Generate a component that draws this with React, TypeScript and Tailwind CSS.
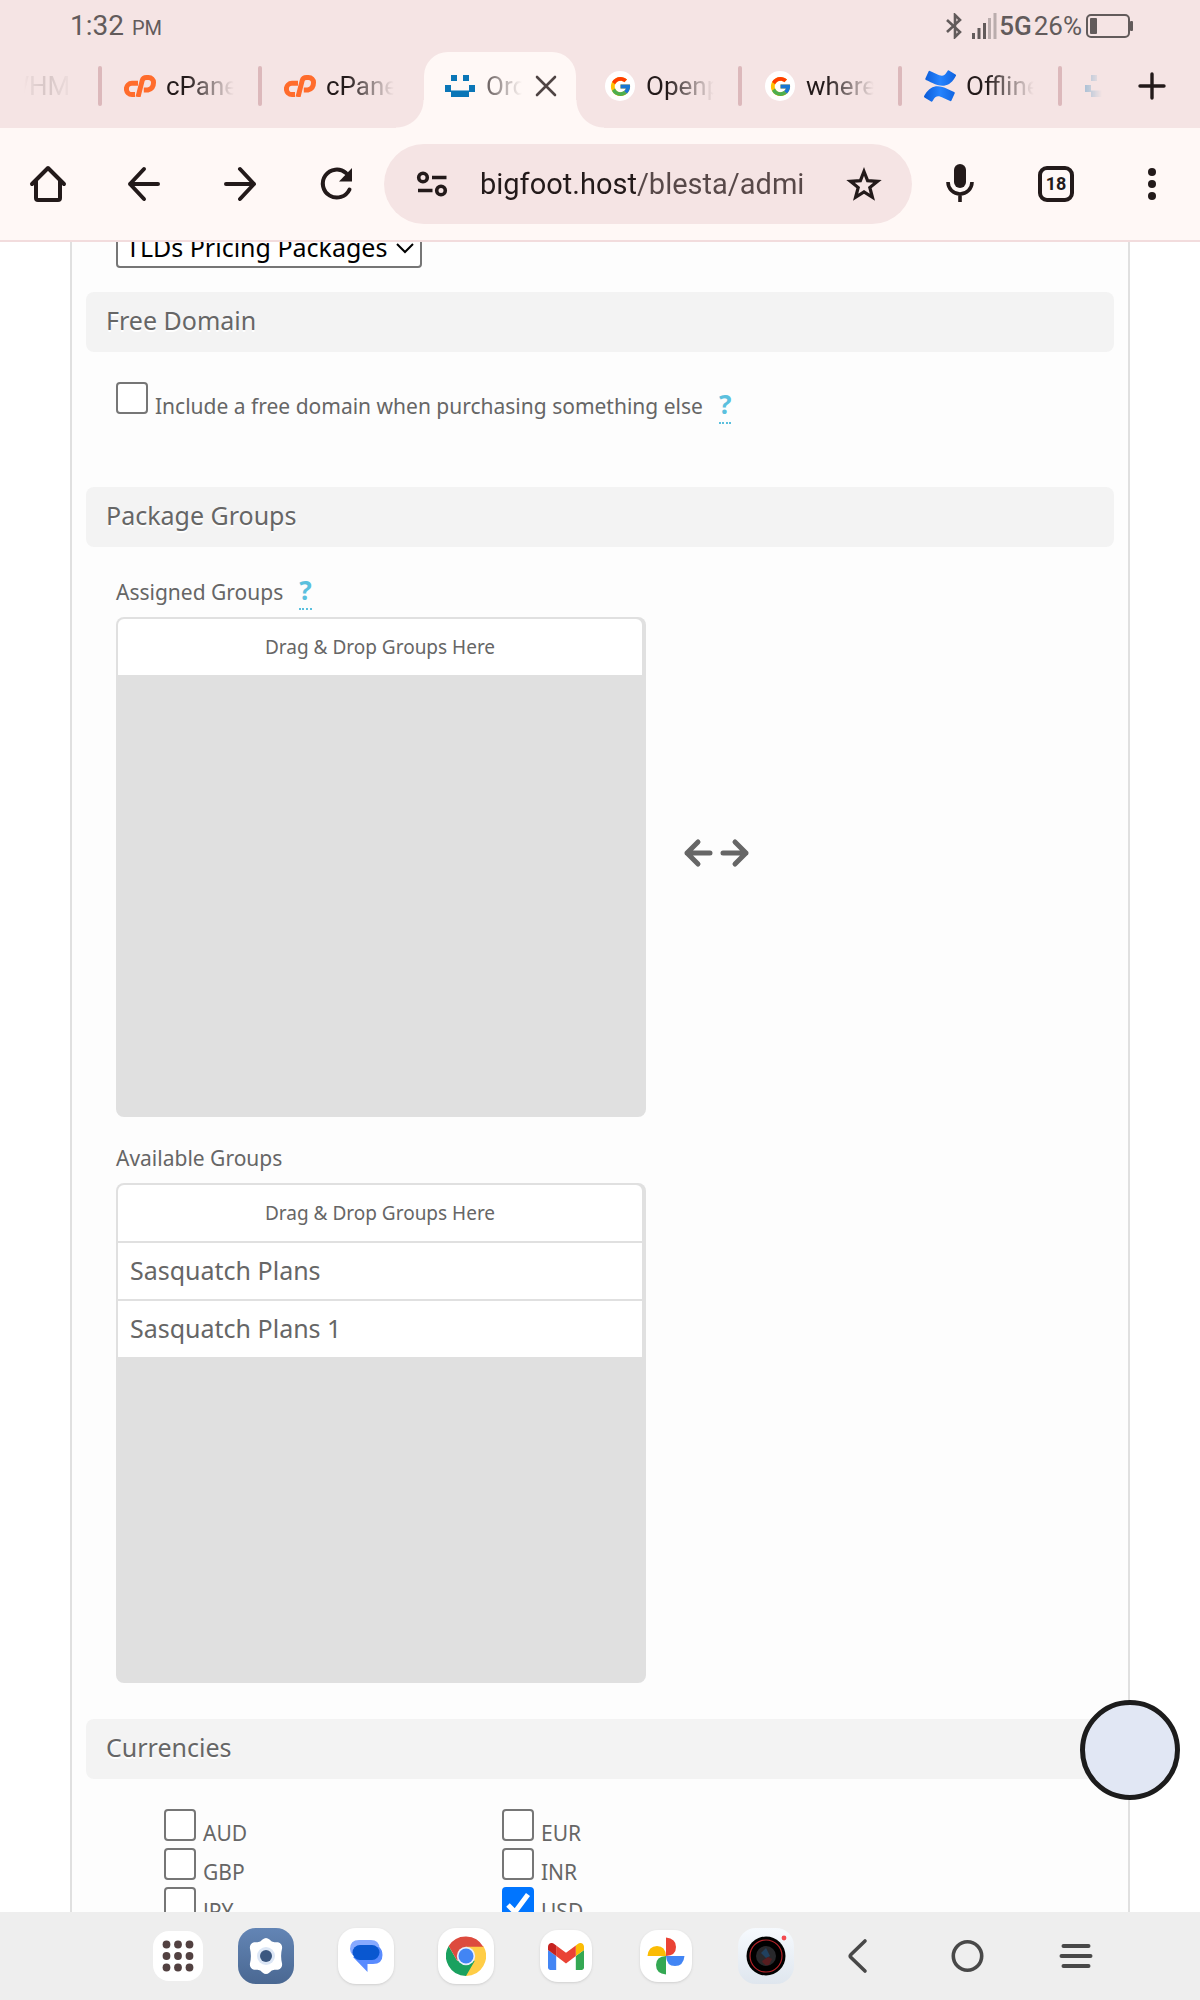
import { useState } from 'react';
import type { ReactNode } from 'react';
import { FcGoogle } from 'react-icons/fc';
import { SiConfluence } from 'react-icons/si';

// Shape of a tab in the browser tab strip
interface BrowserTab {
  id: number;
  title: string;
  icon: ReactNode;
  active?: boolean;
  fade?: string;
}

const BlestaIcon = () => (
  <svg viewBox="0 0 32 24" className="h-6 w-8" shapeRendering="crispEdges">
    <g fill="#0a76b7">
      <rect x="7" y="1" width="6" height="6" />
      <rect x="19" y="1" width="6" height="6" />
      <rect x="1" y="11" width="6" height="7" />
      <rect x="25" y="11" width="6" height="7" />
      <rect x="7" y="17" width="18" height="6" />
    </g>
    <path d="M7 16.5h18" stroke="#7db5d6" strokeWidth="1" />
  </svg>
);

const CpanelIcon = () => (
  <svg viewBox="0 0 32 22" className="h-[22px] w-8" fill="none" stroke="#ff6c2c" strokeWidth="5">
    <path d="M14 8.300H8a5.600 5.600 0 0 0 0 11.200h3" />
    <path d="M14 22L18.200 5.500Q19 2.500 22.500 2.500h2a5 5 0 0 1 5 5.200q0 6-5.700 7.300h-4" />
  </svg>
);

const GoogleIcon = () => (
  <span className="flex size-[30px] items-center justify-center rounded-full bg-white">
    <FcGoogle size={23} />
  </span>
);

const ConfluenceIcon = () => (
  <>
    <svg className="absolute size-0">
      <linearGradient id="confluence" x1="0" y1="0" x2="1" y2="0">
        <stop offset="0" stopColor="#0a5ad6" />
        <stop offset="0.5" stopColor="#2684ff" />
        <stop offset="1" stopColor="#0f62de" />
      </linearGradient>
    </svg>
    <SiConfluence size={32} fill="url(#confluence)" />
  </>
);

const tabs: BrowserTab[] = [
  { id: 1, title: 'WHM', icon: <CpanelIcon />, fade: '[mask-image:linear-gradient(90deg,transparent_84px,#0004_110px)]' },
  { id: 2, title: 'cPanel', icon: <CpanelIcon /> },
  { id: 3, title: 'cPanel', icon: <CpanelIcon /> },
  { id: 4, title: 'Order', icon: <BlestaIcon />, active: true },
  { id: 5, title: 'Openprovider', icon: <GoogleIcon /> },
  { id: 6, title: 'where', icon: <GoogleIcon /> },
  { id: 7, title: 'Offline', icon: <ConfluenceIcon /> },
  { id: 8, title: '', icon: <BlestaIcon />, fade: '[mask-image:linear-gradient(90deg,#0006_20px,transparent_42px)]' },
];

function StatusBar() {
  return (
    <div className="flex h-[50px] items-center justify-between pt-px pr-[66px] pl-[70px] text-[#625b5b]">
      <div className="flex items-baseline gap-2 font-[Roboto] text-[28px] leading-8">
        <span>1:32</span>
        <span className="text-xl">PM</span>
      </div>
      <div className="flex items-center font-[Roboto] text-[26px] leading-8">
        <svg viewBox="0 0 16 26" className="mr-[10px] h-[26px] w-4" fill="none" stroke="currentColor" strokeWidth="2.600">
          <path d="M1 7l13 12-5 5V2l5 5L1 19" />
        </svg>
        <svg viewBox="0 0 26 26" className="mr-px h-[26px] w-[26px]" fill="currentColor">
          <rect x="0" y="20" width="3" height="6" />
          <rect x="5.500" y="15" width="3" height="11" />
          <rect x="11" y="10" width="3" height="16" />
          <rect x="16" y="5" width="3" height="21" opacity=".4" />
          <rect x="21.500" y="0" width="3" height="26" opacity=".4" />
        </svg>
        <span className="mr-0.5 font-medium">5G</span>
        <span className="mr-1">26%</span>
        <svg viewBox="0 0 48 24" className="h-6 w-12">
          <rect x="1" y="1" width="42" height="22" rx="4" fill="none" stroke="currentColor" strokeWidth="2" />
          <rect x="4" y="4" width="7" height="16" rx="1" fill="currentColor" />
          <rect x="44" y="7" width="3" height="10" rx="1" fill="currentColor" />
        </svg>
      </div>
    </div>
  );
}

function TabStrip() {
  return (
    <div className="flex h-[78px] items-end">
      <div className="h-full min-w-0 flex-1 overflow-hidden">
        {/* The strip is scrolled, so the first tab is cut off */}
        <div className="-ml-[60px] flex h-full">
          {tabs.map((tab, index) => {
            const lineAfter = !tab.active && !tabs[index + 1]?.active && index < tabs.length - 1;
            return (
              <div key={tab.id} className="relative h-full w-40 shrink-0">
                {tab.active && (
                  <>
                    <div className="absolute inset-x-1 top-0.5 bottom-0 rounded-t-3xl bg-[#fff8f6]" />
                    <div className="absolute bottom-0 -left-6 size-7 bg-[radial-gradient(circle_at_top_left,transparent_27px,#fff8f6_28px)]" />
                    <div className="absolute -right-6 bottom-0 size-7 bg-[radial-gradient(circle_at_top_right,transparent_27px,#fff8f6_28px)]" />
                  </>
                )}
                <div className={`absolute inset-0 flex items-center pb-[6px] pl-6 ${tab.fade ?? ''}`}>
                  <span className="flex w-8 shrink-0 justify-center">{tab.icon}</span>
                  <button
                    className={
                      tab.active
                        ? 'ml-[10px] w-9 overflow-hidden bg-[linear-gradient(90deg,#665c5c,transparent)] bg-clip-text text-left font-[Roboto] text-[26px] leading-8 whitespace-nowrap text-transparent'
                        : 'ml-[10px] w-[70px] overflow-hidden bg-[linear-gradient(90deg,#231a1a_30%,transparent_97%)] bg-clip-text text-left font-[Roboto] text-[26px] leading-8 whitespace-nowrap text-transparent'
                    }
                  >
                    {tab.title}
                  </button>
                  {tab.active && (
                    <button aria-label="Close tab" className="ml-[13px]">
                      <svg viewBox="0 0 22 22" className="size-[22px]" stroke="#4f4444" strokeWidth="2.600" strokeLinecap="round">
                        <path d="M2 2l18 18M20 2L2 20" />
                      </svg>
                    </button>
                  )}
                </div>
                {lineAfter && <div className="absolute top-4 -right-0.5 h-10 w-1 rounded-full bg-[#dcb8bb]" />}
              </div>
            );
          })}
        </div>
      </div>
      <button aria-label="New tab" className="flex h-full w-24 items-center justify-center pb-[6px]">
        <svg viewBox="0 0 28 28" className="size-7" stroke="#231a1a" strokeWidth="3.400" strokeLinecap="round">
          <path d="M14 2v24M2 14h24" />
        </svg>
      </button>
    </div>
  );
}

// Square button of the browser toolbar
function ToolButton({ label, children }: { label: string; children: ReactNode }) {
  return (
    <button aria-label={label} className="flex h-full w-24 shrink-0 items-center justify-center">
      <svg viewBox="0 0 48 48" className="size-12" fill="none" stroke="#231a1a" strokeWidth="4" strokeLinecap="round" strokeLinejoin="round">
        {children}
      </svg>
    </button>
  );
}

function Toolbar() {
  return (
    <div className="flex h-[114px] items-center border-b-2 border-[#f2dcdd] bg-[#fff8f6]">
      <ToolButton label="Home">
        <path d="M8 24L24 8l16 16M12 21v17a2 2 0 0 0 2 2h20a2 2 0 0 0 2-2V21" />
      </ToolButton>
      <ToolButton label="Back">
        <path d="M38 24H10M24 9L10 24l14 15" />
      </ToolButton>
      <ToolButton label="Forward">
        <path d="M10 24h28M24 9l14 15-14 15" />
      </ToolButton>
      <ToolButton label="Reload">
        <path d="M37.500 29.500A14 14 0 1 1 34 13" />
        <path d="M40 8v13.500H27z" fill="#231a1a" stroke="none" />
      </ToolButton>
      <div className="flex h-20 min-w-0 flex-1 items-center rounded-full bg-[#f5e4e4] pr-[30px] pl-8">
        <svg viewBox="0 0 32 28" className="h-7 w-8 shrink-0" fill="none" stroke="#231a1a" strokeWidth="3.600">
          <circle cx="7" cy="7.500" r="4.300" />
          <path d="M16 7.500h14.500M2 20.500h14.500" />
          <circle cx="25" cy="20.500" r="4.300" />
        </svg>
        <input
          aria-label="Address"
          defaultValue="bigfoot.host/blesta/admi"
          className="ml-8 w-0 min-w-0 flex-1 bg-[linear-gradient(90deg,#231a1a_157px,#574848_157px)] bg-clip-text font-[Roboto] text-[29px] leading-10 text-transparent outline-none"
        />
        <button aria-label="Bookmark">
          <svg viewBox="0 0 36 36" className="size-9" fill="none" stroke="#231a1a" strokeWidth="3.200">
            <path d="M18 5.500l3.600 9.200 9.900.6-7.700 6.200 2.600 9.800L18 26l-8.400 5.300 2.600-9.800-7.700-6.200 9.900-.6z" />
          </svg>
        </button>
      </div>
      <ToolButton label="Voice search">
        <rect x="18" y="4" width="12" height="24" rx="6" fill="#231a1a" stroke="none" />
        <path d="M12 22a12 12 0 0 0 24 0M24 34v8" strokeWidth="3.600" strokeLinecap="butt" />
      </ToolButton>
      <button aria-label="Tabs" className="flex h-full w-24 shrink-0 items-center justify-center">
        <span className="flex size-9 items-center justify-center rounded-[9px] border-4 border-[#231a1a] font-[Roboto] text-lg font-bold text-[#231a1a]">18</span>
      </button>
      <ToolButton label="Menu">
        <g fill="#231a1a" stroke="none">
          <circle cx="24" cy="12" r="4" />
          <circle cx="24" cy="24" r="4" />
          <circle cx="24" cy="36" r="4" />
        </g>
      </ToolButton>
    </div>
  );
}

const SectionTitle = ({ children }: { children: ReactNode }) => (
  <h3 className="h-[60px] rounded-lg bg-[#f3f3f3] px-5 text-[25px] leading-[56px] [text-shadow:0_2px_0_#fff]">{children}</h3>
);

const Help = () => (
  <a href="#help" className="ml-4 border-b-2 border-dotted border-[#5bc0de] text-[26px] font-bold text-[#5bc0de]">?</a>
);

function Checkbox({ label, checked, children }: { label: string; checked?: boolean; children?: ReactNode }) {
  const [on, setOn] = useState(!!checked);
  const id = `check-${label}`;

  return (
    <div className="flex h-[39px] items-baseline">
      <span className="relative mr-[7px] size-8 shrink-0">
        <input
          id={id}
          type="checkbox"
          checked={on}
          onChange={(e) => setOn(e.target.checked)}
          className="block size-8 appearance-none rounded border-2 border-[#767676] bg-white checked:border-[#0075ff] checked:bg-[#0075ff]"
        />
        {on && (
          <svg viewBox="0 0 32 32" className="pointer-events-none absolute inset-0" fill="none" stroke="#fff" strokeWidth="5">
            <path d="M6 18l7 7L26 7.500" />
          </svg>
        )}
      </span>
      <span className="text-[21px] leading-[30px]">
        <label htmlFor={id}>{label}</label>
        {children}
      </span>
    </div>
  );
}

function GroupList({ title, groups, help }: { title: string; groups: string[]; help?: boolean }) {
  return (
    <div className="w-[530px]">
      <p className="text-[21px] leading-[30px]">
        {title}
        {help && <Help />}
      </p>
      <ul className="mt-[10px] flex h-[500px] flex-col gap-0.5 rounded-lg bg-[#e0e0e0] pt-0.5 pr-1 pl-0.5">
        <li className="h-14 rounded-t-md bg-white text-center text-[19px] leading-[56px]">Drag &amp; Drop Groups Here</li>
        {groups.map((group) => (
          <li key={group} className="h-14 bg-white px-3 text-[25px] leading-[54px]">
            {group}
          </li>
        ))}
      </ul>
    </div>
  );
}

const AppTile = ({ label, tile, children }: { label: string; tile: string; children: ReactNode }) => (
  <button aria-label={label} className="flex w-[100px] shrink-0 justify-center">
    <span className={`flex items-center justify-center overflow-hidden rounded-[18px] ${tile}`}>{children}</span>
  </button>
);

function Dock() {
  return (
    <nav className="flex h-[88px] shrink-0 items-center bg-[#eee] pl-32">
      <button aria-label="All apps" className="mr-[-12px] flex w-[100px] shrink-0 justify-center">
        <span className="flex size-[50px] items-center justify-center rounded-2xl bg-white">
          <svg viewBox="0 0 32 32" className="size-8" fill="#524141">
            {[4.5, 16, 27.5].map((y) => [4.5, 16, 27.5].map((x) => <circle key={`${x}-${y}`} cx={x} cy={y} r="3.900" />))}
          </svg>
        </span>
      </button>
      <AppTile label="Settings" tile="size-14 bg-linear-to-b from-[#6385b5] to-[#4a6892]">
        <svg viewBox="0 0 40 40" className="size-10">
          <path
            d="M16.500 3.500q3.500-3 7 0 2 2.500 5 2.800h3.500q4.500 1.500 4.100 6-2 7.700 0 15.400.4 4.500-4.100 6h-3.500q-3 .3-5 2.800-3.500 3-7 0-2-2.500-5-2.800H8q-4.500-1.500-4.100-6 2-7.700 0-15.400Q3.500 7.800 8 6.300h3.500q3-.3 5-2.800z"
            fill="#fff"
          />
          <circle cx="20" cy="20" r="9" fill="#dce6f5" />
          <circle cx="20" cy="20" r="6" fill="#3b5780" />
        </svg>
      </AppTile>
      <AppTile label="Messages" tile="size-14 bg-white shadow-sm">
        <svg viewBox="0 0 34 34" className="size-[34px]">
          <path d="M10 1h12q8 0 8.500 8v6H10L3.500 16Q1 13 1 10q0-9 9-9z" fill="#87a9ff" />
          <path d="M30 8q3.500 2.500 3.500 8 0 9-9.500 9h-5.500v8L4 18z" fill="#598bff" />
          <rect x="3.500" y="6" width="27" height="15" rx="7.500" fill="#0957d0" />
        </svg>
      </AppTile>
      <AppTile label="Chrome" tile="size-14 bg-white shadow-sm">
        <svg viewBox="0 0 48 48" className="size-10">
          <path d="M24 24V12h20.800A24 24 0 0 1 24 48z" fill="#ffcd46" />
          <path d="M3.200 12A24 24 0 0 0 24 48l10.400-18L24 24l-10.400 6z" fill="#1aa15f" />
          <path d="M24 13h20.800A24 24 0 0 0 3.200 12l10.400 18z" fill="#dd4b3e" />
          <circle cx="24" cy="24" r="11" fill="#e8eefb" />
          <circle cx="24" cy="24" r="9" fill="#4285f4" />
        </svg>
      </AppTile>
      <AppTile label="Gmail" tile="size-[52px] bg-white shadow-sm">
        <svg viewBox="52 42 88 66" className="h-[27px] w-9">
          <path fill="#4285f4" d="M58 108h14V74L52 59v43c0 3.320 2.690 6 6 6" />
          <path fill="#34a853" d="M120 108h14c3.320 0 6-2.690 6-6V59l-20 15" />
          <path fill="#fbbc04" d="M120 48v26l20-15v-8c0-7.420-8.470-11.650-14.400-7.200" />
          <path fill="#ea4335" d="M72 74V48l24 18 24-18v26L96 92" />
          <path fill="#c5221f" d="M52 51v8l20 15V48l-5.600-4.200c-5.940-4.450-14.400-.22-14.400 7.200" />
        </svg>
      </AppTile>
      <AppTile label="Photos" tile="size-[52px] bg-white shadow-sm">
        <svg viewBox="0 0 38 38" className="size-[38px]">
          <path d="M19 19V.5q10 1 10 9.500t-10 9" fill="#ea4335" />
          <path d="M19 19h18.500q-1 10-9.500 10t-9-10" fill="#4285f4" />
          <path d="M19 19v18.500Q9 36.500 9 28t10-9" fill="#34a853" />
          <path d="M19 19H.5Q1.500 9 10 9t9 10" fill="#fbbc04" />
        </svg>
      </AppTile>
      <AppTile label="Camera" tile="size-14 bg-linear-to-b from-[#f6fafe] to-[#dfe6ee]">
        <svg viewBox="0 0 56 56" className="size-14">
          <circle cx="28" cy="28" r="19.500" fill="#000" />
          <circle cx="28" cy="28" r="16" fill="none" stroke="#b32228" strokeWidth="1.200" />
          <circle cx="28" cy="28" r="10" fill="#28282b" />
          <path d="M23 25l5-5 4 8-4 2z" fill="#20415f" />
          <path d="M24 33l6-4 4 2-3 6q-5 1-7-4" fill="#571d20" />
          <circle cx="46" cy="10" r="2.400" fill="#f34a50" />
        </svg>
      </AppTile>
      <div className="ml-[14px] flex gap-[53px] text-[#484848]">
        <button aria-label="Back" className="flex w-14 justify-center">
          <svg viewBox="0 0 36 36" className="size-9" fill="none" stroke="currentColor" strokeWidth="3.600" strokeLinecap="round" strokeLinejoin="round">
            <path d="M25 3L11 16.500q-1.500 1.500 0 3L25 33" />
          </svg>
        </button>
        <button aria-label="Home screen" className="flex w-14 justify-center">
          <svg viewBox="0 0 36 36" className="size-9" fill="none" stroke="currentColor" strokeWidth="3.600">
            <circle cx="18.500" cy="18" r="14.200" />
          </svg>
        </button>
        <button aria-label="Recent apps" className="flex w-14 justify-center">
          <svg viewBox="0 0 36 36" className="size-9" stroke="currentColor" strokeWidth="4" strokeLinecap="round">
            <path d="M5.500 8h25M3.500 18h29M5.500 28h25" />
          </svg>
        </button>
      </div>
    </nav>
  );
}

const currencies = ['AUD', 'EUR', 'GBP', 'INR', 'JPY', 'USD'];

export default function App() {
  return (
    <div className="relative flex h-screen flex-col overflow-hidden bg-white">
      <header className="shrink-0 bg-[#f5e4e4]">
        <StatusBar />
        <TabStrip />
        <Toolbar />
      </header>

      <main className="min-h-0 flex-1 overflow-hidden px-[70px] font-['Noto_Sans',sans-serif] text-[#666]">
        <div className="min-h-full border-x-2 border-[#e0e0e0] bg-[#fdfdfd] px-[14px]">
          <div className="relative -mt-[14px] ml-[30px] w-[306px]">
            <select aria-label="Package group" className="block h-10 w-full appearance-none rounded border-2 border-[#767676] bg-white pb-0.5 pl-2 text-[25px] leading-[34px] text-black">
              <option>TLDs Pricing Packages</option>
            </select>
            <svg viewBox="0 0 18 12" className="pointer-events-none absolute top-[14px] right-2 h-3 w-[18px]" fill="none" stroke="#000" strokeWidth="2">
              <path d="M1 2l8 8 8-8" />
            </svg>
          </div>

          <div className="mt-6">
            <SectionTitle>Free Domain</SectionTitle>
            <div className="mt-[30px] ml-[30px]">
              <Checkbox label="Include a free domain when purchasing something else">
                <Help />
              </Checkbox>
            </div>
          </div>

          <div className="mt-[66px]">
            <SectionTitle>Package Groups</SectionTitle>
            <div className="mt-7 ml-[30px] flex items-center gap-9">
              <GroupList title="Assigned Groups" groups={[]} help />
              <svg viewBox="0 0 68 32" className="mt-[14px] h-8 w-[68px]" fill="none" stroke="#666" strokeWidth="5" strokeLinecap="round" strokeLinejoin="round">
                <path d="M28 16H5M16 5L5 16l11 11M41 16h23M53 5l11 11-11 11" />
              </svg>
            </div>
            <div className="mt-[26px] ml-[30px]">
              <GroupList title="Available Groups" groups={['Sasquatch Plans', 'Sasquatch Plans 1']} />
            </div>
          </div>

          <div className="mt-9">
            <SectionTitle>Currencies</SectionTitle>
            <div className="mt-[30px] ml-[78px] grid w-[676px] grid-cols-2">
              {currencies.map((code) => (
                <Checkbox key={code} label={code} checked={code === 'USD'} />
              ))}
            </div>
          </div>
        </div>
      </main>

      <Dock />

      {/* Floating assistive ball, lies over the page */}
      <button aria-label="Assistive ball" className="absolute right-5 bottom-[200px] size-[100px] rounded-full border-[5px] border-[#1c1c1c] bg-[#e0e7f4]/98" />
    </div>
  );
}
